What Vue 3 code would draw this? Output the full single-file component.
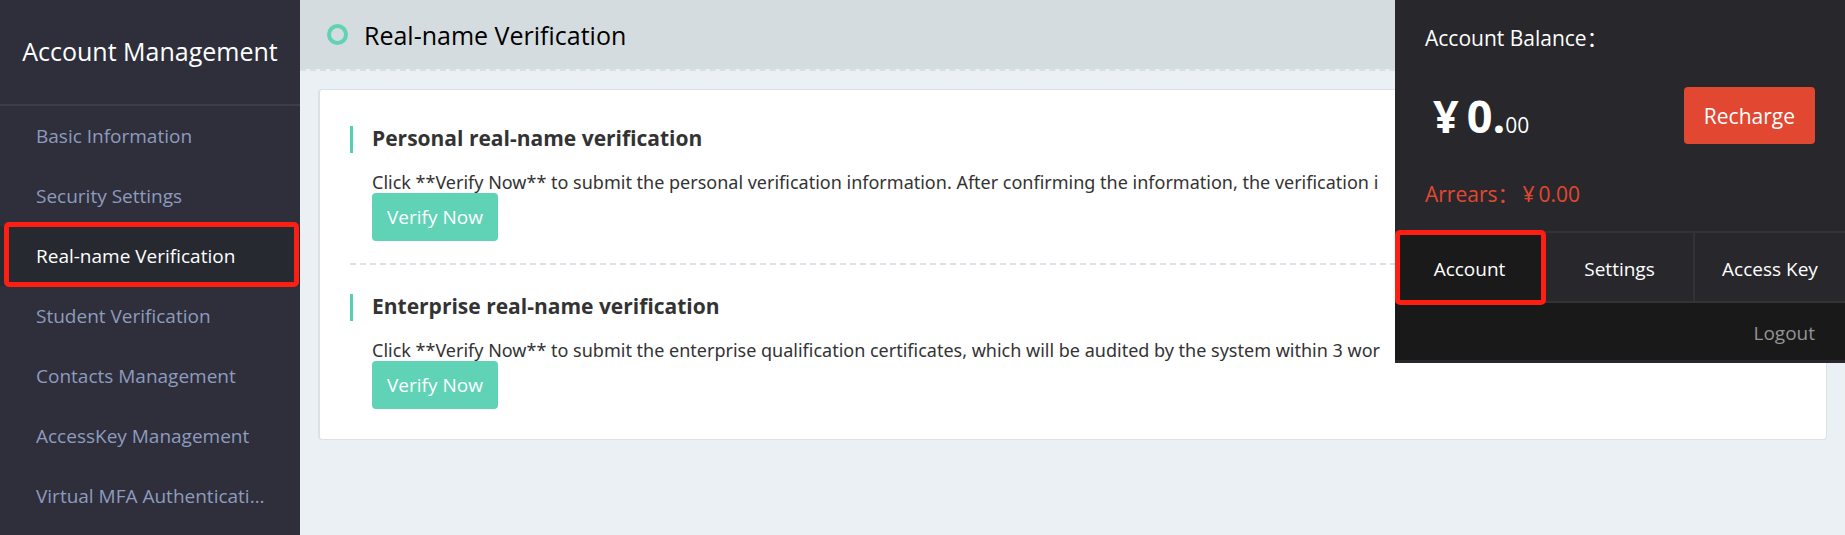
<script setup>
import { ref } from 'vue'

const navItems = [
  'Basic Information',
  'Security Settings',
  'Real-name Verification',
  'Student Verification',
  'Contacts Management',
  'AccessKey Management',
  'Virtual MFA Authentication',
]
const current = ref('Real-name Verification')

const sections = [
  {
    title: 'Personal real-name verification',
    text: 'Click **Verify Now** to submit the personal verification information. After confirming the information, the verification i',
  },
  {
    title: 'Enterprise real-name verification',
    text: 'Click **Verify Now** to submit the enterprise qualification certificates, which will be audited by the system within 3 wor',
  },
]

const tabs = ['Account', 'Settings', 'Access Key']
const currentTab = ref('Account')
</script>

<template>
  <div class="page">
    <aside class="sidebar">
      <h2 class="sidebar-title">Account Management</h2>
      <nav class="nav">
        <a
          v-for="item in navItems"
          :key="item"
          href="#"
          class="nav-item"
          :class="{ active: item === current }"
          @click.prevent="current = item"
        ><span class="nav-label">{{ item }}</span></a>
      </nav>
    </aside>

    <main class="main">
      <header class="header">
        <span class="ring"></span>
        <h1 class="header-title">Real-name Verification</h1>
      </header>
      <div class="card">
        <section v-for="s in sections" :key="s.title" class="section">
          <h3 class="section-title">{{ s.title }}</h3>
          <div class="section-body">
            <p class="section-text">{{ s.text }}</p>
            <button type="button" class="verify">Verify Now</button>
          </div>
        </section>
      </div>
    </main>

    <div class="account-menu">
      <div class="balance">
        <p class="balance-label">Account Balance：</p>
        <div class="balance-row">
          <p class="amount"><strong class="amount-main"><span class="yen">¥</span>0.</strong><span>00</span></p>
          <button type="button" class="recharge">Recharge</button>
        </div>
        <p class="arrears">Arrears：<span class="yen-small">¥</span>0.00</p>
      </div>
      <nav class="tabs">
        <a
          v-for="t in tabs"
          :key="t"
          href="#"
          class="tab"
          :class="{ active: t === currentTab }"
          @click.prevent="currentTab = t"
        >{{ t }}</a>
      </nav>
      <div class="logout-row"><a href="#" class="logout">Logout</a></div>
    </div>
  </div>
</template>

<style>
body {
  margin: 0;
  background: #ebf0f4;
}
</style>

<style scoped>
.page {
  position: relative;
  display: flex;
  height: 100vh;
  overflow: hidden;
  background: #ebf0f4;
  color: #333;
  font-family: "Open Sans", "Noto Sans CJK SC", sans-serif;
  font-size: 19px;
}
.page * {
  box-sizing: border-box;
}
h1, h2, h3, p {
  margin: 0;
}
a {
  text-decoration: none;
}
button {
  border: 0;
  border-radius: 4px;
  color: #fff;
  font-family: inherit;
  cursor: pointer;
}

.sidebar {
  flex: 0 0 300px;
  min-width: 0;
  background: #2e2f3b;
}
.sidebar-title {
  height: 106px;
  border-bottom: 2px solid #3a3e49;
  color: #fff;
  font-size: 25px;
  font-weight: 400;
  line-height: 102px;
  text-align: center;
  white-space: nowrap;
}
.nav-item {
  position: relative;
  display: block;
  height: 60px;
  padding: 0 28px 0 36px;
  color: #8f9bbd;
  line-height: 60px;
}
.nav-label {
  display: block;
  overflow: hidden;
  text-overflow: ellipsis;
  white-space: nowrap;
}
.nav-item.active {
  background: #272930;
  color: #fff;
}
.nav-item.active::after,
.tab.active::after {
  content: "";
  position: absolute;
  border: 5px solid #ff1f12;
  border-radius: 5px;
}
.nav-item.active::after {
  inset: -4px 1px -1px 4px;
}

.main {
  flex: 1;
  min-width: 0;
}
.header {
  display: flex;
  align-items: center;
  gap: 16px;
  height: 71px;
  padding-left: 27px;
  border-bottom: 2px dashed #d8dfe6;
  background: #d5dcdf;
  background-clip: padding-box;
}
.ring {
  width: 21px;
  height: 21px;
  border: 4px solid #60d2b6;
  border-radius: 50%;
}
.header-title {
  color: #000;
  font-size: 25px;
  font-weight: 400;
}
.card {
  margin: 18px 18px 0;
  padding: 36px 30px 30px;
  border: 1px solid #dbe1e7;
  border-left-width: 2px;
  border-radius: 4px;
  background: #fff;
}
.section + .section {
  margin-top: 22px;
  padding-top: 29px;
  border-top: 2px dashed #dbe1e7;
}
.section-title {
  padding: 0 0 2px 19px;
  border-left: 3px solid #55d0b3;
  font-size: 21px;
  font-weight: 700;
  line-height: 25px;
}
.section-body {
  padding: 17px 0 0 22px;
}
.section-text {
  height: 23px;
  font-family: "Noto Sans", sans-serif;
  font-size: 18px;
  line-height: 25px;
  white-space: nowrap;
}
.verify {
  display: block;
  height: 48px;
  padding: 0 15px;
  background: #60d2b6;
  font-size: 19px;
}

.account-menu {
  position: absolute;
  top: 0;
  right: 0;
  width: 450px;
  padding-bottom: 3px;
  background: #28272c;
  color: #fff;
}
.balance {
  height: 231px;
  padding: 24px 30px 0;
  font-size: 21px;
}
.balance-label,
.arrears {
  line-height: 28px;
}
.balance-row {
  display: flex;
  align-items: center;
  justify-content: space-between;
  height: 57px;
  margin: 35px 0 36px;
}
.amount-main {
  font-size: 45px;
  line-height: 57px;
}
.yen {
  margin: 0 8px;
}
.yen-small {
  margin: 0 4px;
}
.recharge {
  height: 57px;
  padding: 0 20px;
  background: #e24831;
  font-size: 21px;
}
.arrears {
  color: #e24831;
}
.tabs {
  display: grid;
  grid-template-columns: 149px 149px 1fr;
  border-top: 2px solid #333;
  border-bottom: 2px solid #333;
}
.tab {
  position: relative;
  height: 68px;
  color: #fff;
  line-height: 72px;
  text-align: center;
}
.tab + .tab {
  border-left: 2px solid #333;
}
.tab.active {
  background: #1a1a1a;
}
.tab.active::after {
  inset: -3px -2px -4px 0;
  z-index: 1;
}
.logout-row {
  height: 57px;
  padding-right: 30px;
  background: #191919;
  line-height: 60px;
  text-align: right;
}
.logout {
  color: #949494;
}
</style>
